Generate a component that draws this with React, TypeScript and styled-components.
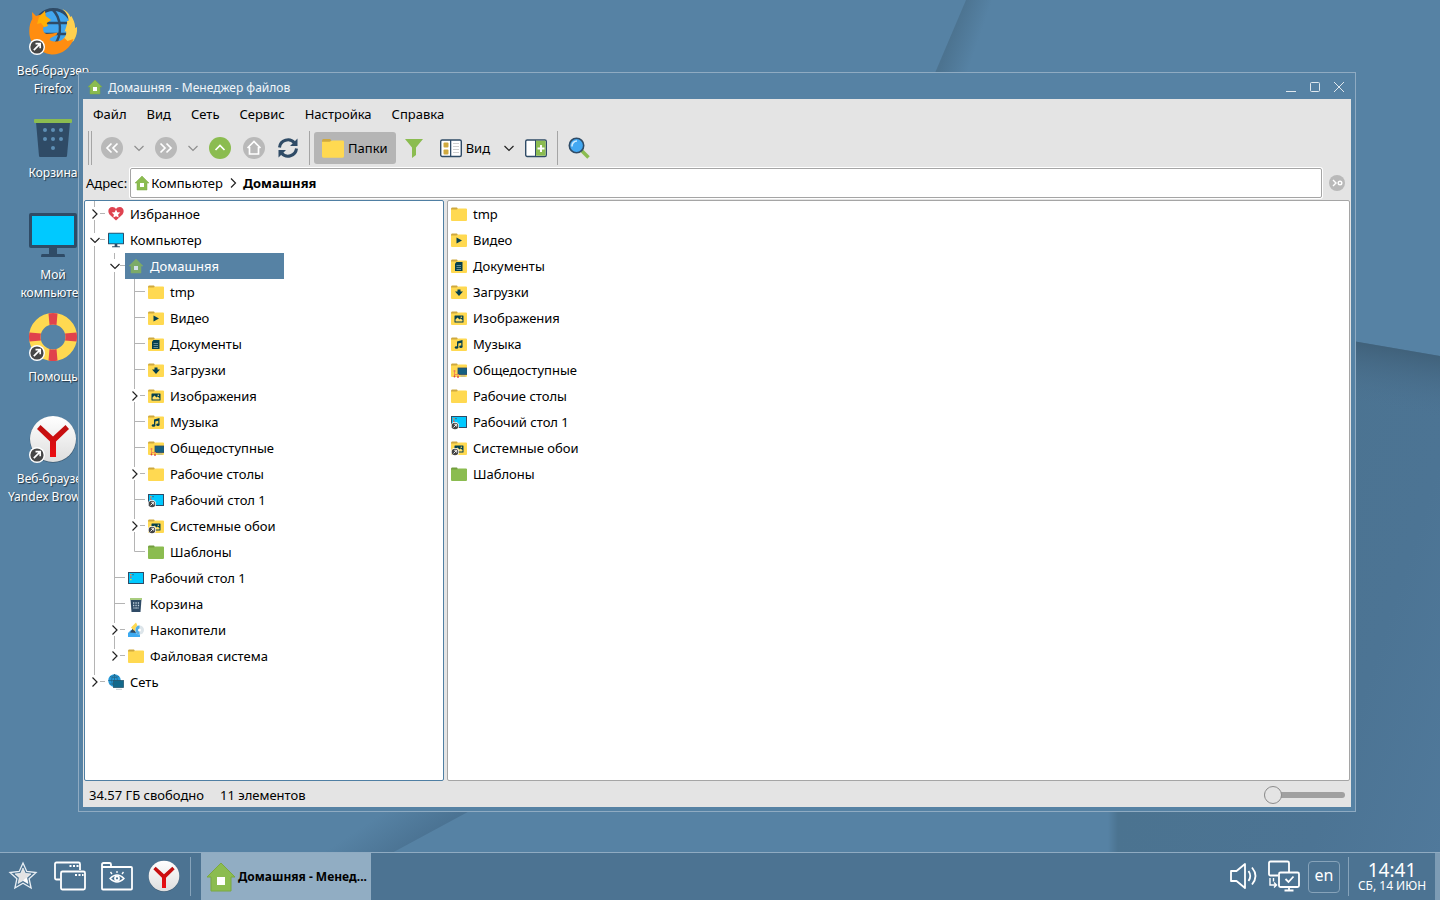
import React from "react";
import styled, { createGlobalStyle } from "styled-components";

const c = {
  base: "#5682a4",
  panel: "#e4e4e4",
  line: "#a5a5a5",
  frame: "#8fabc2",
  bar: "#4c7392",
  green: "#8bbc50",
  navy: "#2f4b66",
  grey: "#b9b9b9",
  yellow: "#ffd951",
  amber: "#cfa93f",
  teal: "#05404f",
  cyan: "#00c9ff",
};

const GlobalStyle = createGlobalStyle`
  * { box-sizing: border-box; }
  body { margin: 0; font-family: "Noto Sans", sans-serif; font-size: 13px; line-height: 18px; color: #000; background: ${c.base}; }
  button { font: inherit; color: inherit; background: none; border: 0; padding: 0; margin: 0; }
  ul { list-style: none; margin: 0; padding: 0; }
  svg { display: block; flex: none; }
`;

/* ---------- page ---------- */

const Screen = styled.div`
  position: relative;
  display: flex;
  flex-direction: column;
  height: 100vh;
  overflow: hidden;
`;

const Wallpaper = styled.svg`
  position: absolute;
  inset: 0;
  width: 100%;
  height: 100%;
`;

const Desktop = styled.main`
  position: relative;
  flex: 1;
  min-height: 0;
`;

const Shortcuts = styled.nav`
  display: flex;
  flex-direction: column;
  width: 106px;
  padding-top: 7px;
`;

const Shortcut = styled.a`
  display: flex;
  flex-direction: column;
  align-items: center;
  gap: 7px;
  height: 102px;
  color: #fff;
  font-size: 12px;
  text-align: center;
  white-space: pre-line;
  text-decoration: none;
  text-shadow: 1px 1px 1px rgba(0, 0, 0, 0.6);
`;

/* ---------- file manager window ---------- */

const Window = styled.section`
  position: absolute;
  top: 72px;
  right: 84px;
  bottom: 40px;
  left: 78px;
  display: flex;
  flex-direction: column;
  padding: 0 4px 4px;
  background: ${c.base};
  border: 1px solid ${c.frame};
`;

const TitleBar = styled.header`
  display: flex;
  align-items: center;
  height: 26px;
  padding-left: 4px;
  padding-top: 2px;
`;

const Title = styled.h1`
  flex: 1;
  margin: 0 0 0 5px;
  color: #f2f6f9;
  font-size: 12px;
  font-weight: 400;
  line-height: 20px;
  padding-top: 1px;
`;

const WindowButton = styled.button`
  display: grid;
  place-items: center;
  width: 24px;
  height: 24px;
`;

const Body = styled.div`
  display: flex;
  flex: 1;
  flex-direction: column;
  min-height: 0;
  background: ${c.panel};
`;

const MenuBar = styled.nav`
  display: flex;
  height: 31px;
  padding-bottom: 2px;
`;

const MenuItem = styled.button`
  padding: 0 10px;
`;

const Toolbar = styled.div`
  display: flex;
  align-items: center;
  height: 36px;
  padding-left: 5px;
`;

const Handle = styled.span`
  width: 4px;
  height: 34px;
  margin-right: 3px;
  border: solid ${c.line};
  border-width: 0 1px;
`;

const ToolButton = styled.button<{ $pressed?: boolean }>`
  display: flex;
  align-items: center;
  justify-content: center;
  gap: 4px;
  min-width: 34px;
  height: 32px;
  margin-right: ${(p) => (p.$pressed ? 1 : 0)}px;
  padding: 0 ${(p) => (p.$pressed ? 8 : 0)}px;
  border-radius: 3px;
  background: ${(p) => (p.$pressed ? "#b5b5b5" : "transparent")};
`;

const ViewButton = styled(ToolButton)`
  padding: 0 9px;
`;

const DropButton = styled.button`
  display: grid;
  place-items: center;
  width: 20px;
  height: 32px;
`;

const Separator = styled.span`
  width: 1px;
  height: 34px;
  margin: 0 4px;
  background: ${c.line};
`;

const AddressRow = styled.div`
  display: flex;
  align-items: center;
  height: 34px;
  padding: 0 6px 0 3px;
  gap: 3px;
`;

const AddressBox = styled.nav`
  display: flex;
  flex: 1;
  align-items: center;
  height: 30px;
  padding: 0 3px;
  background: #fff;
  border: 1px solid ${c.line};
  border-radius: 2px;
  box-shadow: 0 0 0 1px #fff;
`;

const Crumb = styled.a<{ $current?: boolean }>`
  display: flex;
  align-items: center;
  gap: 1px;
  color: #000;
  font-weight: ${(p) => (p.$current ? 700 : 400)};
  text-decoration: none;
`;

const CrumbArrow = styled.span`
  display: grid;
  place-items: center;
  width: 20px;
`;

const GoButton = styled.button`
  margin-left: 4px;
`;

const Panes = styled.div`
  display: flex;
  flex: 1;
  gap: 3px;
  min-height: 0;
  padding: 0 1px;
`;

const Pane = styled.div<{ $side?: boolean }>`
  flex: ${(p) => (p.$side ? "0 0 360px" : "1")};
  min-width: 0;
  overflow: hidden;
  background: #fff;
  border: 1px solid ${(p) => (p.$side ? "#4f7fa3" : c.line)};
  border-radius: 2px;
`;

const Tree = styled.ul`
  width: max-content;
`;

const TreeRow = styled.li`
  display: flex;
  height: 26px;
`;

const Branch = styled.span`
  width: 20px;
`;

const Expander = styled.button`
  width: 20px;
  height: 26px;
`;

const Entry = styled.a<{ $selected?: boolean }>`
  display: flex;
  flex: 1;
  align-items: center;
  gap: 6px;
  height: 26px;
  padding: 0 8px 0 3px;
  color: ${(p) => (p.$selected ? "#fff" : "#000")};
  background: ${(p) => (p.$selected ? c.base : "transparent")};
  text-decoration: none;
`;

const StatusBar = styled.footer`
  display: flex;
  align-items: center;
  gap: 16px;
  height: 26px;
  padding: 2px 6px 0;
`;

const Zoom = styled.input`
  appearance: none;
  width: 81px;
  height: 18px;
  margin: 0 0 0 auto;
  background: transparent;
  &::-webkit-slider-runnable-track {
    height: 6px;
    border-radius: 3px;
    background: #a0a0a0;
  }
  &::-webkit-slider-thumb {
    appearance: none;
    width: 18px;
    height: 18px;
    margin-top: -6px;
    border: 1px solid #8c8c8c;
    border-radius: 50%;
    background: ${c.panel};
  }
`;

/* ---------- taskbar ---------- */

const Taskbar = styled.footer`
  position: relative;
  display: flex;
  align-items: center;
  height: 48px;
  background: ${c.bar};
  border-top: 1px solid ${c.frame};
  color: #fff;
`;

const Launchers = styled.div`
  display: flex;
  margin-right: 2px;
`;

const Launcher = styled.button`
  display: grid;
  place-items: center;
  width: 47px;
  height: 47px;
  padding: 0 1px 1px 0;
`;

const BarLine = styled.span`
  width: 1px;
  height: 39px;
  background: #86a3ba;
`;

const Task = styled.button`
  display: flex;
  align-items: center;
  gap: 1px;
  width: 170px;
  height: 47px;
  margin-left: 10px;
  padding: 0 0 0 4px;
  background: #91adc3;
  color: #000;
  font-size: 12px;
  font-weight: 700;
  white-space: nowrap;
`;

const Tray = styled.div`
  display: flex;
  align-items: center;
  gap: 8px;
  height: 100%;
  margin-left: auto;
`;

const TrayButton = styled.button`
  display: block;
  padding-bottom: 1px;
`;

const Language = styled.button`
  width: 32px;
  height: 32px;
  padding-bottom: 4px;
  border: 1px solid #86a3ba;
  border-radius: 4px;
  font-size: 16px;
`;

const Clock = styled.time`
  display: flex;
  flex-direction: column;
  align-items: center;
  min-width: 70px;
  font-size: 12px;
  line-height: 14px;
`;

const Hours = styled.span`
  font-size: 19px;
  line-height: 18px;
`;

const ShowDesktop = styled.button`
  width: 5px;
  height: 100%;
  background: #7d9cb5;
`;

/* ---------- drawings ---------- */

const ShortcutBadge = () => (
  <g>
    <circle cx="8" cy="40" r="8" fill="#fff" />
    <circle cx="8" cy="40" r="6.6" fill="#464646" />
    <path d="M4.8 43.2l6-6M6.5 36.6h4.7v4.7" fill="none" stroke="#fff" strokeWidth="1.7" />
  </g>
);

const FirefoxIcon = () => (
  <svg width="48" height="48" viewBox="0 0 48 48">
    <circle cx="24.5" cy="21" r="18.5" fill="#42a6ee" stroke={c.navy} strokeWidth="3" />
    <path d="M23 2c10 9 10 26 3 35M14 16h26M13 27h26" fill="none" stroke={c.navy} strokeWidth="2.4" />
    <path d="M33.500 2c4 2 6 4 8 8l1-1c2 4 4 8 3.500 12l2-1c.5 6-1 10-3.500 14l-8 5-3-6c4-4 4-7 3.500-9l-1.500 1c2-6 3-9 2.500-11l1.500 0c0-5-2-8-6-12z" fill="#ffd04f" />
    <path d="M3 5l4 4c3-1 6-1 9-5l.5 5 5 4-4 3 1 3-4 1c-1 3 0 6 3 7l6-.5 5-1-1 2.500-6 3-1 2c5 2.500 11 2 15-2l3 3 6-2c-3 9-12 16-22 15.500C9 45.500 0 36 .3 24c0-5 1-9 3-12z" fill="#ff8d10" />
    <path d="M10 10l6-6 .5 5 5.500 4-4.500 3 1.500 3-4 1-3-4-4 1z" fill="#ffb005" />
    <ShortcutBadge />
  </svg>
);

const trashDots = [[16, 21], [24, 21], [32, 21], [16, 30], [24, 30], [32, 30], [24, 39]];

const TrashIcon = () => (
  <svg width="48" height="48" viewBox="0 0 48 48">
    <path d="M7 13h34l-3 34q-.2 1-1 1H11q-.8 0-1-1z" fill={c.navy} />
    <rect x="5" y="10" width="38" height="4" rx="1" fill={c.green} />
    {trashDots.map(([x, y]) => (
      <circle key={`${x}-${y}`} cx={x} cy={y} r="2" fill="#5e8fb5" />
    ))}
  </svg>
);

const MonitorIcon = ({ size = 48 }: { size?: number }) => (
  <svg width={size} height={size} viewBox="0 0 48 48">
    <path d="M20 36h8v7h7q1 0 1 3H12q0-3 1-3h7z" fill={c.navy} />
    <rect y="2" width="48" height="35" rx="2" fill={c.navy} />
    <rect x="3" y="5" width="42" height="29" fill={c.cyan} />
  </svg>
);

const HelpIcon = () => (
  <svg width="48" height="48" viewBox="0 0 48 48">
    <circle cx="24" cy="24" r="18.200" fill="none" stroke="#ffd951" strokeWidth="11.500" />
    <path d="M19.500 .5q4.500-1 9 0l-1 11.500q-3.500-1-7 0zM19.500 47.500q4.500 1 9 0l-1-11.500q-3.500 1-7 0zM.5 19.500q-1 4.500 0 9l11.500-1q-1-3.500 0-7zM47.500 19.500q1 4.500 0 9l-11.500-1q1-3.500 0-7z" fill="#e0434c" />
    <ShortcutBadge />
  </svg>
);

const YandexIcon = ({ size = 48, badge }: { size?: number; badge?: boolean }) => (
  <svg width={size} height={size} viewBox="0 0 48 48">
    <defs>
      <linearGradient id="pearl" x2="0" y2="1"><stop stopColor="#fff" /><stop offset="1" stopColor="#dedede" /></linearGradient>
      <linearGradient id="ruby" x2="0" y2="1"><stop stopColor="#bb1010" /><stop offset="1" stopColor="#ed0d12" /></linearGradient>
    </defs>
    <circle cx="24" cy="24.500" r="23.300" fill="#3d5b73" />
    <circle cx="24" cy="24" r="23" fill="url(#pearl)" />
    <path d="M8 14l3.500-4L24 21.500 36.500 10l3.500 4-13 12.500V42h-6V26.500z" fill="url(#ruby)" />
    {badge && <ShortcutBadge />}
  </svg>
);

const HomeIcon = ({ size = 16, dim }: { size?: number; dim?: boolean }) => (
  <svg width={size} height={size} viewBox="0 0 16 16">
    <path d="M8 1l7 7h-2v7H3V8H1z" fill={dim ? "#7cab68" : c.green} stroke={dim ? "#7cab68" : "#7ba842"} strokeWidth=".5" strokeLinejoin="round" />
    <rect x="6" y="8" width="4" height="4" fill={dim ? "#d3e0ea" : "#fff"} />
  </svg>
);

const Chevron = ({ down, color = "#222" }: { down?: boolean; color?: string }) => (
  <svg width="12" height="12" viewBox="0 0 12 12">
    <path d={down ? "M1.500 4l4.500 4.500L10.500 4" : "M4 1.500L8.500 6 4 10.500"} fill="none" stroke={color} strokeWidth="1.200" />
  </svg>
);

const discPaths = {
  back: "M10.500 6.500L6 11l4.500 4.500M16.500 6.500L12 11l4.500 4.500",
  forward: "M5.500 6.500L10 11l-4.500 4.500M11.500 6.500L16 11l-4.500 4.500",
  up: "M6.500 13L11 8.500l4.500 4.500",
  home: "M4.500 11L11 4.500l6.500 6.500M6.500 10v7h9v-7",
};

const Disc = ({ kind }: { kind: keyof typeof discPaths }) => (
  <svg width="22" height="22" viewBox="0 0 22 22">
    <circle cx="11" cy="11" r="11" fill={kind === "up" ? c.green : c.grey} />
    <path d={discPaths[kind]} fill="none" stroke="#fff" strokeWidth="1.700" />
  </svg>
);

const ReloadIcon = () => (
  <svg width="22" height="22" viewBox="0 0 22 22">
    <path d="M2.500 10.500A8.500 8.500 0 0 1 17.500 6M19.500 11.500A8.500 8.500 0 0 1 4.500 16" fill="none" stroke={c.navy} strokeWidth="3" />
    <path d="M20.500 1.500v7.500h-7.500zM1.500 20.500v-7.500h7.500z" fill={c.navy} />
  </svg>
);

const FunnelIcon = () => (
  <svg width="22" height="22" viewBox="0 0 22 22">
    <path d="M2 2h18l-7 8.500V18l-4 3V10.500z" fill={c.green} />
  </svg>
);

const ViewIcon = () => (
  <svg width="22" height="22" viewBox="0 0 22 22">
    <rect x=".7" y="3" width="20.600" height="16.500" rx="1.500" fill="#fff" stroke={c.navy} strokeWidth="1.400" />
    <rect x="10" y="3" width="1.300" height="16" fill={c.navy} />
    <rect x="3.500" y="5.500" width="5" height="5" rx="1" fill={c.amber} />
    <rect x="3.500" y="12.500" width="5" height="5" rx="1" fill={c.amber} />
    <path d="M13 6.500h6M13 9.500h6M13 12.500h6M13 15.500h6" stroke="#cfcfcf" />
  </svg>
);

const PanelIcon = () => (
  <svg width="22" height="22" viewBox="0 0 22 22">
    <rect x=".7" y="3" width="20.600" height="16.500" rx="1.500" fill="#fff" stroke={c.navy} strokeWidth="1.400" />
    <path d="M11 3.700h9.600v15H11z" fill={c.green} />
    <path d="M10.500 3v16.500" stroke={c.navy} />
    <path d="M16 8v7M12.500 11.500h7" stroke="#fff" strokeWidth="2" />
  </svg>
);

const SearchIcon = () => (
  <svg width="22" height="22" viewBox="0 0 22 22">
    <path d="M13 13l7.500 7.500" stroke={c.green} strokeWidth="3.500" />
    <circle cx="8.500" cy="8.500" r="7.200" fill="#43a8f2" stroke={c.navy} strokeWidth="1.600" />
    <path d="M4 9.500A5 5 0 0 1 9 4" fill="none" stroke="#cdebff" strokeWidth="1.600" />
  </svg>
);

type IconName =
  | "folder" | "video" | "docs" | "down" | "image" | "music" | "public"
  | "desktop" | "deskLink" | "imageLink" | "template"
  | "heart" | "computer" | "home" | "trash" | "drives" | "network";

const MiniBadge = () => (
  <g>
    <circle cx="4" cy="12" r="4" fill="#fff" />
    <circle cx="4" cy="12" r="3.300" fill="#454545" />
    <path d="M2.500 13.500l3-3M3.300 10.300h2.400v2.400" fill="none" stroke="#fff" strokeWidth=".9" />
  </g>
);

const Picture = () => (
  <g>
    <rect x="3.500" y="5.500" width="9" height="7" rx=".5" fill={c.teal} />
    <path d="M4.500 11.500V9.500l2-2 2 2 1-1 2 1.500v1.500z" fill="#ffdf69" />
    <circle cx="10.300" cy="7.300" r=".8" fill="#ffdf69" />
  </g>
);

const marks: Partial<Record<IconName, React.ReactNode>> = {
  video: <path d="M5.500 5.500l5.500 3-5.500 3z" fill={c.teal} />,
  docs: (
    <g>
      <path d="M5.500 4h6v9h-7.500v-7.500z" fill={c.teal} />
      <path d="M5.500 7.500h4.500M5.500 9.500h4.500M5.500 11.500h4.500" stroke="#7d9fa5" strokeWidth=".8" />
    </g>
  ),
  down: <path d="M6.500 5.500h3v2H12L8 12 4 7.500h2.500z" fill={c.teal} />,
  image: <Picture />,
  imageLink: <Picture />,
  music: (
    <g fill={c.teal}>
      <path d="M6 5.500L11.500 4v6.500h-1.200V6.800l-3 .8v4H6z" />
      <ellipse cx="5.500" cy="11.500" rx="1.800" ry="1.300" />
      <ellipse cx="9.900" cy="10.700" rx="1.700" ry="1.300" />
    </g>
  ),
  public: (
    <g>
      <rect x="7" y="6" width="9" height="6.500" fill="#155f80" stroke={c.navy} strokeWidth=".8" />
      <path d="M9.500 14h5" stroke="#9aa" />
      <path d="M3.500 9v3.500h4.500M3.500 12v2M7 12v2.500" stroke="#ee8350" strokeWidth=".8" fill="none" />
      <circle cx="3.500" cy="9" r="1" fill="#ef7a5c" />
      <circle cx="3.500" cy="14.500" r=".9" fill="#d84343" />
      <circle cx="7" cy="15" r=".9" fill="#d84343" />
    </g>
  ),
};

const FolderShape = ({ green }: { green?: boolean }) => (
  <g>
    <path d="M0 3q0-1.500 1-1.500h5L7 3h8.500v5H0z" fill={green ? "#739e3f" : c.amber} />
    <path d="M0 3.500h5.500L7.500 2.500H15q1 0 1 1V14q0 1-1 1H1q-1 0-1-1z" fill={green ? c.green : c.yellow} />
  </g>
);

const DeskShape = () => (
  <g>
    <rect x=".5" y="2.500" width="15" height="11" fill={c.cyan} stroke={c.navy} />
    <path d="M2 4h1.500v1.500H2z" fill="#f0884a" />
    <path d="M4.300 4h1.400v1.200H4.300z" fill="#32688d" />
    <path d="M2 6.500h1.500V8H2z" fill="#ef5a4a" />
    <path d="M2 9h1.500v1.200H2z" fill="#d9d34f" />
  </g>
);

const ItemIcon = ({ name, dim }: { name: IconName; dim?: boolean }) => {
  if (name === "home") return <HomeIcon dim={dim} />;
  if (name === "computer") return <MonitorIcon size={16} />;
  if (name === "heart")
    return (
      <svg width="16" height="16" viewBox="0 0 16 16">
        <path d="M8 14.500L1.500 8.500C-1 5 .8 1 4.300 1 6 1 7.300 1.800 8 3 8.700 1.800 10 1 11.700 1c3.500 0 5.300 4 2.800 7.500z" fill="#df4350" />
        <path d="M8 3.500l1.300 2.700 3 .4-2.200 2 .6 3L8 10.200l-2.700 1.400.6-3-2.200-2 3-.4z" fill="#fff" />
      </svg>
    );
  if (name === "trash")
    return (
      <svg width="16" height="16" viewBox="0 0 16 16">
        <path d="M2.500 3h11l-1 13h-9z" fill={c.navy} />
        <rect x="2" y="2" width="12" height="2" fill="#a9cd7f" />
        <path d="M5 7h1.300M7.400 7h1.300M9.800 7h1.300M5 9.500h1.300M7.400 9.500h1.300M9.800 9.500h1.300M5.500 12h1M7.400 12h1.300M9.500 12h1" stroke="#c2d3df" strokeWidth="1.300" />
      </svg>
    );
  if (name === "drives")
    return (
      <svg width="16" height="16" viewBox="0 0 16 16">
        <path d="M0 11l3-3h9v7H0z" fill="#3daaf0" />
        <path d="M2 10.500L5 6l4 5z" fill={c.navy} />
        <path d="M3 5.500L8 .5l2 4.500-3.500 4z" fill="#ffd951" />
        <circle cx="11.500" cy="8" r="4.500" fill="#dde5ea" />
        <path d="M11.500 3.500v9q-4 0-4-4.500t4-4.500z" fill="#52aee5" />
        <circle cx="11.500" cy="8" r="1.500" fill="#fff" />
      </svg>
    );
  if (name === "network")
    return (
      <svg width="16" height="16" viewBox="0 0 16 16">
        <circle cx="6.500" cy="6.500" r="6.300" fill="#2398d8" />
        <path d="M6.500 0v13M.3 6.500h12.400M2 2.500q4.500 2.500 9 0M1.500 10h6M6.500.3q-6 6 0 12.400M6.500.3q6 6 0 12.400" fill="none" stroke="#24617f" strokeWidth=".7" />
        <rect x="5.500" y="6.500" width="10" height="7" fill="#12688a" stroke="#275a72" strokeWidth=".8" />
        <path d="M8 15.300h6" stroke="#c5ccd0" />
      </svg>
    );
  if (name === "desktop" || name === "deskLink")
    return (
      <svg width="16" height="16" viewBox="0 0 16 16">
        <DeskShape />
        {name === "deskLink" && <MiniBadge />}
      </svg>
    );
  return (
    <svg width="16" height="16" viewBox="0 0 16 16">
      <FolderShape green={name === "template"} />
      {marks[name]}
      {name === "imageLink" && <MiniBadge />}
    </svg>
  );
};

/* Guide cells of the tree: plain lines, or an expander arrow with the line cut around it */
type Cell = "line" | "tee" | "end" | "open" | "closed" | "closedLast";

const cellPaths: Record<Cell, string> = {
  line: "M9.500 0v26",
  tee: "M9.500 0v26M9.500 12.500h11",
  end: "M9.500 0v12.500h11",
  open: "M9.500 0v6M9.500 19v7M15 12.500h5",
  closed: "M9.500 0v6M9.500 19v7M15 12.500h5",
  closedLast: "M9.500 0v6M15 12.500h5",
};

const CellDrawing = ({ cell }: { cell: Cell }) => (
  <svg width="20" height="26" viewBox="0 0 20 26">
    <path d={cellPaths[cell]} fill="none" stroke="#b4b4b4" />
    {cell === "open" && <path d="M5.500 11l4.500 4.500 4.500-4.500" fill="none" stroke="#222" strokeWidth="1.200" />}
    {cell.startsWith("closed") && <path d="M7.500 8.500L12 13l-4.500 4.500" fill="none" stroke="#222" strokeWidth="1.200" />}
  </svg>
);

type TreeItem = { label: string; icon: IconName; cells: Cell[]; selected?: boolean };

const tree: TreeItem[] = [
  { label: "Избранное", icon: "heart", cells: ["closed"] },
  { label: "Компьютер", icon: "computer", cells: ["open"] },
  { label: "Домашняя", icon: "home", cells: ["line", "open"], selected: true },
  { label: "tmp", icon: "folder", cells: ["line", "line", "tee"] },
  { label: "Видео", icon: "video", cells: ["line", "line", "tee"] },
  { label: "Документы", icon: "docs", cells: ["line", "line", "tee"] },
  { label: "Загрузки", icon: "down", cells: ["line", "line", "tee"] },
  { label: "Изображения", icon: "image", cells: ["line", "line", "closed"] },
  { label: "Музыка", icon: "music", cells: ["line", "line", "tee"] },
  { label: "Общедоступные", icon: "public", cells: ["line", "line", "tee"] },
  { label: "Рабочие столы", icon: "folder", cells: ["line", "line", "closed"] },
  { label: "Рабочий стол 1", icon: "deskLink", cells: ["line", "line", "tee"] },
  { label: "Системные обои", icon: "imageLink", cells: ["line", "line", "closed"] },
  { label: "Шаблоны", icon: "template", cells: ["line", "line", "end"] },
  { label: "Рабочий стол 1", icon: "desktop", cells: ["line", "tee"] },
  { label: "Корзина", icon: "trash", cells: ["line", "tee"] },
  { label: "Накопители", icon: "drives", cells: ["line", "closed"] },
  { label: "Файловая система", icon: "folder", cells: ["line", "closedLast"] },
  { label: "Сеть", icon: "network", cells: ["closedLast"] },
];

const files: { label: string; icon: IconName }[] = [
  { label: "tmp", icon: "folder" },
  { label: "Видео", icon: "video" },
  { label: "Документы", icon: "docs" },
  { label: "Загрузки", icon: "down" },
  { label: "Изображения", icon: "image" },
  { label: "Музыка", icon: "music" },
  { label: "Общедоступные", icon: "public" },
  { label: "Рабочие столы", icon: "folder" },
  { label: "Рабочий стол 1", icon: "deskLink" },
  { label: "Системные обои", icon: "imageLink" },
  { label: "Шаблоны", icon: "template" },
];

const shortcuts = [
  { label: "Веб-браузер\nFirefox", icon: <FirefoxIcon /> },
  { label: "Корзина", icon: <TrashIcon /> },
  { label: "Мой\nкомпьютер", icon: <MonitorIcon /> },
  { label: "Помощь", icon: <HelpIcon /> },
  { label: "Веб-браузер\nYandex Browser", icon: <YandexIcon badge /> },
];

const menus = ["Файл", "Вид", "Сеть", "Сервис", "Настройка", "Справка"];

const StarIcon = () => (
  <svg width="30" height="30" viewBox="0 0 30 30">
    <path d="M15 2l3.800 8.500 9.200 1-6.900 6.200 2 9.300-8.100-4.800L6.900 27l2-9.300L2 11.500l9.200-1z" fill="none" stroke="#e9eff4" strokeWidth="1.300" />
    <path d="M15 7l2.300 5.300 5.700.6-4.300 3.800 1.300 5.800-5-3-5 3 1.300-5.800L7 12.900l5.700-.6z" fill="#e3e3e3" stroke="#fff" strokeWidth=".6" />
    <path d="M15 19.500l5 3-1.300-5.800 4.300-3.800z" fill="#fff" />
  </svg>
);

const WindowsIcon = () => (
  <svg width="32" height="30" viewBox="0 0 32 30" fill="none" stroke="#fff" strokeWidth="1.800">
    <path d="M6 18.500H2.500q-1.500 0-1.500-1.500V3q0-1.500 1.500-1.500h22Q26 1.500 26 3v6" />
    <rect x="7" y="10.500" width="24" height="18" rx="1.500" />
    <path d="M15.500 5h2M19 5h2M22.500 5h2M21 14h2M24.500 14h2M28 14h1.500" />
  </svg>
);

const FolderEyeIcon = () => (
  <svg width="32" height="30" viewBox="0 0 32 30" fill="none" stroke="#fff" strokeWidth="1.800">
    <path d="M1 6V3.500Q1 2 2.500 2h6Q10 2 10 3.500V6h20q1 0 1 1v20.500q0 1-1 1H2q-1 0-1-1zh9" />
    <path d="M9 17.500q7-7 14 0-7 7-14 0z" strokeWidth="1.400" />
    <circle cx="16" cy="17.300" r="2" />
    <path d="M11 13l-1.500-2M21 13l1.500-2M16 12v-2" strokeWidth="1.300" />
  </svg>
);

const SpeakerIcon = () => (
  <svg width="30" height="28" viewBox="0 0 30 28" fill="none" stroke="#fff" strokeWidth="1.800">
    <path d="M1 9h5.500L15 2v24l-8.500-7H1z" strokeLinejoin="round" />
    <path d="M18.500 9q3.500 5 0 10M22 5.500q7 8.500 0 17" />
  </svg>
);

const NetworkIcon = () => (
  <svg width="32" height="32" viewBox="0 0 32 32" fill="none" stroke="#fff" strokeWidth="1.800">
    <path d="M10 15.500H2.500Q1 15.500 1 14V3q0-1.500 1.500-1.500h17Q21 1.500 21 3v9" />
    <rect x="11" y="12.500" width="20" height="14.500" rx="1.500" />
    <path d="M21 27v3.500M16.500 30.500h9M17.500 19l3 3 5-5.500" />
    <path d="M2 18v7h6M5.500 18v3.500M6 22.500L8.500 25 6 27.500" strokeWidth="1.400" />
  </svg>
);

export default function App() {
  return (
    <>
      <GlobalStyle />
      <Screen>
        <Wallpaper viewBox="0 0 1440 900" preserveAspectRatio="none" aria-hidden="true">
          <defs>
            <linearGradient id="foldTop" gradientUnits="userSpaceOnUse" x1="951" y1="36" x2="977" y2="45">
              <stop stopColor="#4c7390" /><stop offset="1" stopColor={c.base} />
            </linearGradient>
            <linearGradient id="foldRight" gradientUnits="userSpaceOnUse" x1="1400" y1="348" x2="1390" y2="410">
              <stop stopColor="#40617a" /><stop offset="1" stopColor="#4c7292" stopOpacity="0" />
            </linearGradient>
            <linearGradient id="foldDeep" gradientUnits="userSpaceOnUse" x1="1140" y1="760" x2="1440" y2="860">
              <stop stopColor="#4b7390" /><stop offset=".6" stopColor="#4c7494" /><stop offset="1" stopColor="#50799b" />
            </linearGradient>
            <linearGradient id="foldEdge" gradientUnits="userSpaceOnUse" x1="1108" y1="0" x2="1118" y2="0">
              <stop stopColor={c.base} /><stop offset="1" stopColor="#4b7390" />
            </linearGradient>
            <linearGradient id="foldLow" gradientUnits="userSpaceOnUse" x1="432" y1="832" x2="408" y2="796">
              <stop stopColor="#4b7393" /><stop offset="1" stopColor={c.base} />
            </linearGradient>
          </defs>
          <rect width="1440" height="900" fill={c.base} />
          <path d="M966 0h50l-30 80h-54z" fill="url(#foldTop)" />
          <path d="M1300 332l140 24v544h-322V700z" fill="url(#foldDeep)" />
          <path d="M1300 332l140 24v84h-140z" fill="url(#foldRight)" />
          <path d="M1108 800h10v100h-10z" fill="url(#foldEdge)" />
          <path d="M340 800h150l-100 54h-100z" fill="url(#foldLow)" />
        </Wallpaper>

        <Desktop>
          <Shortcuts aria-label="Рабочий стол">
            {shortcuts.map((s) => (
              <Shortcut key={s.label} href="#">
                {s.icon}
                <span>{s.label}</span>
              </Shortcut>
            ))}
          </Shortcuts>

          <Window>
            <TitleBar>
              <HomeIcon />
              <Title>Домашняя - Менеджер файлов</Title>
              <WindowButton aria-label="Свернуть">
                <svg width="10" height="10" stroke="#e0e8ee"><path d="M0 9.500h10" /></svg>
              </WindowButton>
              <WindowButton aria-label="Развернуть">
                <svg width="10" height="10" fill="none" stroke="#e0e8ee"><rect x=".5" y=".5" width="9" height="9" rx="1" /></svg>
              </WindowButton>
              <WindowButton aria-label="Закрыть">
                <svg width="10" height="10" stroke="#e0e8ee"><path d="M0 0l10 10M10 0L0 10" /></svg>
              </WindowButton>
            </TitleBar>

            <Body>
              <MenuBar>
                {menus.map((m) => <MenuItem key={m}>{m}</MenuItem>)}
              </MenuBar>

              <Toolbar>
                <Handle />
                <ToolButton aria-label="Назад"><Disc kind="back" /></ToolButton>
                <DropButton aria-label="История назад"><Chevron down color="#8e8e8e" /></DropButton>
                <ToolButton aria-label="Вперёд"><Disc kind="forward" /></ToolButton>
                <DropButton aria-label="История вперёд"><Chevron down color="#8e8e8e" /></DropButton>
                <ToolButton aria-label="Вверх"><Disc kind="up" /></ToolButton>
                <ToolButton aria-label="Домой"><Disc kind="home" /></ToolButton>
                <ToolButton aria-label="Обновить"><ReloadIcon /></ToolButton>
                <Separator />
                <ToolButton $pressed aria-pressed="true">
                  <svg width="22" height="22" viewBox="0 0 16 16"><FolderShape /></svg>
                  Папки
                </ToolButton>
                <ToolButton aria-label="Фильтр"><FunnelIcon /></ToolButton>
                <ViewButton><ViewIcon />Вид</ViewButton>
                <DropButton aria-label="Варианты вида"><Chevron down /></DropButton>
                <ToolButton aria-label="Добавить панель"><PanelIcon /></ToolButton>
                <Separator />
                <ToolButton aria-label="Поиск"><SearchIcon /></ToolButton>
              </Toolbar>

              <AddressRow>
                <span>Адрес:</span>
                <AddressBox aria-label="Адрес">
                  <Crumb href="#"><HomeIcon />Компьютер</Crumb>
                  <CrumbArrow><Chevron /></CrumbArrow>
                  <Crumb href="#" $current>Домашняя</Crumb>
                </AddressBox>
                <GoButton aria-label="Перейти">
                  <svg width="16" height="16" viewBox="0 0 16 16" fill="none" stroke="#fff" strokeWidth="1.400">
                    <circle cx="8" cy="8" r="8" fill={c.grey} stroke="none" />
                    <path d="M4 5L7 8l-3 3" />
                    <circle cx="11" cy="8" r="1.800" />
                  </svg>
                </GoButton>
              </AddressRow>

              <Panes>
                <Pane $side>
                  <Tree>
                    {tree.map((item, i) => (
                      <TreeRow key={i}>
                        {item.cells.map((cell, n) =>
                          cell === "open" || cell.startsWith("closed") ? (
                            <Expander key={n} aria-label={item.label} aria-expanded={cell === "open"}>
                              <CellDrawing cell={cell} />
                            </Expander>
                          ) : (
                            <Branch key={n}><CellDrawing cell={cell} /></Branch>
                          ),
                        )}
                        <Entry href="#" $selected={item.selected}>
                          <ItemIcon name={item.icon} dim={item.selected} />
                          {item.label}
                        </Entry>
                      </TreeRow>
                    ))}
                  </Tree>
                </Pane>
                <Pane>
                  <ul>
                    {files.map((f) => (
                      <li key={f.label}>
                        <Entry href="#"><ItemIcon name={f.icon} />{f.label}</Entry>
                      </li>
                    ))}
                  </ul>
                </Pane>
              </Panes>

              <StatusBar>
                <span>34.57 ГБ свободно</span>
                <span>11 элементов</span>
                <Zoom type="range" min="0" max="100" defaultValue="0" aria-label="Размер значков" />
              </StatusBar>
            </Body>
          </Window>
        </Desktop>

        <Taskbar>
          <Launchers>
            <Launcher aria-label="Пуск"><StarIcon /></Launcher>
            <Launcher aria-label="Окна"><WindowsIcon /></Launcher>
            <Launcher aria-label="Менеджер файлов"><FolderEyeIcon /></Launcher>
            <Launcher aria-label="Yandex Browser"><YandexIcon size={32} /></Launcher>
          </Launchers>
          <BarLine />
          <Task>
            <HomeIcon size={32} />
            <span>Домашняя - Менед...</span>
          </Task>
          <Tray>
            <TrayButton aria-label="Громкость"><SpeakerIcon /></TrayButton>
            <TrayButton aria-label="Сеть"><NetworkIcon /></TrayButton>
            <Language>en</Language>
            <BarLine />
            <Clock>
              <Hours>14:41</Hours>
              <span>СБ, 14 ИЮН</span>
            </Clock>
            <ShowDesktop aria-label="Показать рабочий стол" />
          </Tray>
        </Taskbar>
      </Screen>
    </>
  );
}
